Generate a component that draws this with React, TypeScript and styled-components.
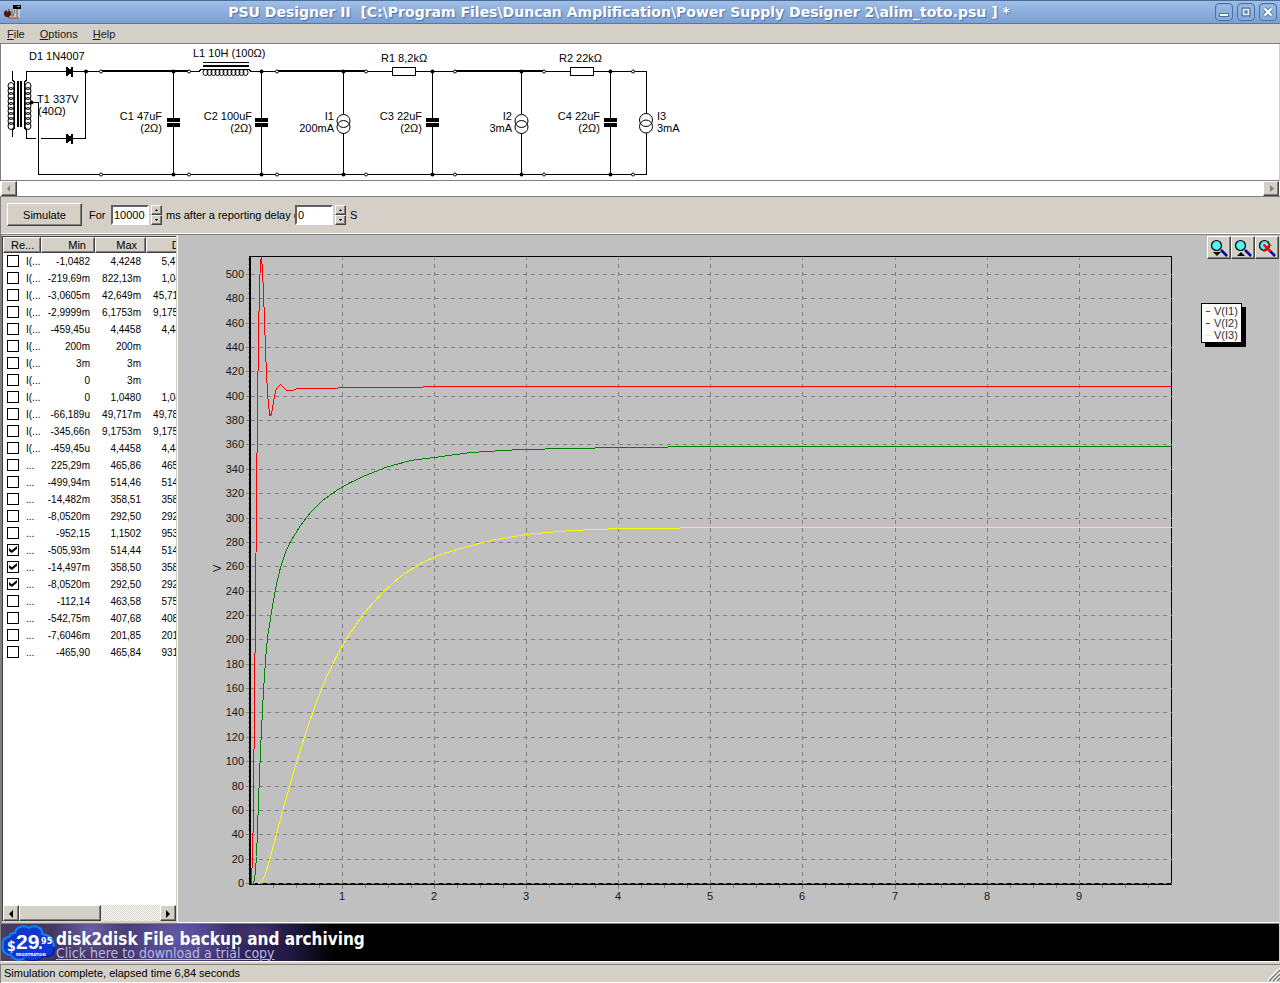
import React from "react";
import styled, { createGlobalStyle, css } from "styled-components";

const face = "#d4d0c8";
const sans = `"Liberation Sans", Arial, sans-serif`;

const GlobalStyle = createGlobalStyle`
  *, *::before, *::after { box-sizing: border-box; }
  body { margin: 0; background: ${face}; font-family: ${sans}; font-size: 11px; line-height: 12px; color: #000; }
  button, input { font: inherit; color: inherit; }
`;

const raised = css`
  border: 1px solid;
  border-color: #fff #404040 #404040 #fff;
  box-shadow: inset -1px -1px 0 #808080;
  background: ${face};
`;

const Window = styled.div`
  display: flex;
  flex-direction: column;
  min-height: 100vh;
  border-bottom: 1px solid #4a6684;
`;

const TitleBar = styled.header`
  display: flex;
  align-items: center;
  height: 24px;
  padding: 0 3px;
  border-top: 1px solid #4a6d98;
  border-bottom: 1px solid #5078b0;
  background: linear-gradient(#a0bee6, #7ba0d3);
`;

const Title = styled.h1`
  flex: 1;
  margin: 0;
  text-align: center;
  white-space: pre;
  overflow: hidden;
  font: bold 14px/20px "DejaVu Sans", sans-serif;
  color: #fff;
  text-shadow: 1px 1px 1px #4a6fa5;
`;

const AppIcon = styled.svg`
  display: block;
  width: 20px;
  height: 16px;
`;

const WindowButtons = styled.div`
  display: flex;
  gap: 4px;
`;

const WindowButton = styled.button`
  width: 18px;
  height: 18px;
  padding: 0;
  border: 1px solid #4a70a6;
  border-radius: 4px;
  background: linear-gradient(#9dbce4, #82a6d8);
  box-shadow: inset 0 0 0 1px #8fb0dd;
  svg { display: block; width: 16px; height: 16px; }
`;

const MenuBar = styled.nav`
  display: flex;
  gap: 15px;
  height: 20px;
  padding: 0 7px;
  border-bottom: 1px solid #808080;
`;

const MenuItem = styled.button`
  padding: 0;
  border: 0;
  background: none;
  font-size: 11px;
  line-height: 20px;
  color: #202020;
`;

const SchematicPane = styled.section`
  height: 137px;
  margin-right: 1px;
  border-left: 1px solid #808080;
  border-bottom: 1px solid #808080;
  background: #fff;
  overflow: hidden;
`;

const SchematicSvg = styled.svg`
  display: block;
  font: 11px ${sans};
`;

const HScroll = styled.div<{ $inset?: boolean }>`
  display: flex;
  flex: none;
  height: ${(p) => (p.$inset ? 16 : 15)}px;
  background: ${(p) => (p.$inset ? "repeating-conic-gradient(#fff 0 25%, #d4d0c8 0 50%) 0 0 / 2px 2px" : "#fff")};
`;

const SchematicScroll = styled.div`
  padding: 0 1px;
  border-bottom: 1px solid #808080;
  background: #fff;
`;

const ScrollButton = styled.button`
  ${raised}
  flex: none;
  width: 16px;
  padding: 0;
  svg { display: block; width: 14px; height: 13px; }
`;

const Track = styled.div`
  flex: 1;
`;

const Thumb = styled.div`
  ${raised}
  flex: none;
  width: 82px;
`;

const ControlBar = styled.form`
  display: flex;
  align-items: center;
  height: 38px;
  padding: 0 6px 2px;
  border-left: 1px solid #808080;
  border-bottom: 1px solid #808080;
  box-shadow: inset 0 -1px 0 #fff;
`;

const SimulateButton = styled.button`
  ${raised}
  width: 75px;
  height: 23px;
  margin-right: 7px;
  padding: 0;
`;

const Label = styled.label<{ $w: number }>`
  width: ${(p) => p.$w}px;
  overflow: hidden;
  white-space: nowrap;
`;

const NumberBox = styled.input`
  width: 38px;
  height: 20px;
  margin-right: 2px;
  padding: 0 1px;
  border: 2px solid;
  border-color: #606060 #fff #fff #606060;
  background: #fff;
  outline: none;
`;

const Spinner = styled.div`
  display: flex;
  flex-direction: column;
  width: 11px;
  height: 20px;
  margin-right: 4px;
`;

const SpinButton = styled.button`
  ${raised}
  flex: 1;
  display: flex;
  align-items: center;
  justify-content: center;
  padding: 0;
  svg { display: block; width: 3px; height: 2px; }
`;

const Main = styled.main`
  display: flex;
  flex: 1;
`;

const ListPane = styled.section`
  display: flex;
  flex-direction: column;
  flex: none;
  width: 178px;
  padding: 1px 0 2px;
  border-left: 2px solid #808080;
  border-right: 1px solid #fff;
  background: ${face};
`;

const ListView = styled.div`
  display: flex;
  flex-direction: column;
  flex: 1;
  border: solid #404040;
  border-width: 1px 0 0 1px;
  background: #fff;
  margin-right: 1px;
`;

const TableWrap = styled.div`
  flex: 1;
  width: 100%;
  overflow: hidden;
`;

const ResultTable = styled.table`
  table-layout: fixed;
  width: 194px;
  border-collapse: separate;
  border-spacing: 0;
`;

const HeadCell = styled.th<{ $left?: boolean }>`
  ${raised}
  height: 16px;
  padding: 0 8px;
  padding-left: 7px;
  text-align: ${(p) => (p.$left ? "left" : "right")};
  font-weight: normal;
  line-height: 13px;
`;

const Cell = styled.td<{ $left?: boolean }>`
  height: 17px;
  padding: ${(p) => (p.$left ? "0 0 1px 4px" : "0 5px 0 0")};
  text-align: ${(p) => (p.$left ? "left" : "right")};
  font-size: 10px;
  line-height: 16px;
  white-space: nowrap;
`;

const RowLabel = styled.label`
  display: flex;
  align-items: flex-start;
  gap: 7px;
  height: 16px;
  line-height: 18px;
`;

const Check = styled.input`
  appearance: none;
  flex: none;
  width: 12px;
  height: 12px;
  margin: 2px 0 0;
  border: 1px solid #000;
  background: #fff;
  &:checked::before {
    content: "";
    display: block;
    width: 8px;
    height: 7px;
    margin: 1px;
    background: #000;
    clip-path: polygon(0 30%, 35% 60%, 100% 0, 100% 38%, 35% 100%, 0 70%);
  }
`;

const ChartPane = styled.section`
  display: flex;
  flex: 1;
  min-width: 0;
  margin-right: 1px;
  border-bottom: 1px solid #fff;
  background: #c0c0c0;
`;

const ChartSvg = styled.svg`
  display: block;
  flex: 1;
  min-width: 0;
  font: 11px ${sans};
`;

const Side = styled.aside`
  display: flex;
  flex-direction: column;
  align-items: flex-start;
  flex: none;
  width: 84px;
`;

const ZoomBar = styled.div`
  display: flex;
  align-self: flex-end;
  margin: 1px 0 44px;
`;

const ZoomButton = styled.button`
  ${raised}
  width: 24px;
  height: 23px;
  padding: 0;
  svg { display: block; width: 22px; height: 21px; }
`;

const Legend = styled.ul`
  width: 41px;
  margin: 0 0 0 6px;
  padding: 1px 3px 1px 4px;
  border: 1px solid #000;
  background: #fff;
  box-shadow: 4px 4px 0 #000;
  list-style: none;
`;

const LegendItem = styled.li<{ $color: string }>`
  display: flex;
  align-items: center;
  gap: 4px;
  line-height: 12px;
  color: #303030;
  &::before {
    content: "";
    width: 4px;
    height: 1px;
    background: ${(p) => p.$color};
  }
`;

const Banner = styled.a`
  display: flex;
  height: 39px;
  border: solid;
  border-width: 1px 0 1px 1px;
  border-color: #808080 #fff #fff #808080;
  margin-right: 1px;
  background: #000;
  color: #fff;
  text-decoration: none;
`;

const BannerArt = styled.div`
  display: flex;
  width: 370px;
  background:
    radial-gradient(ellipse 40px 30px at 90px 6px, #6a60a8, transparent),
    radial-gradient(ellipse 60px 34px at 175px 12px, #6258a8, transparent),
    radial-gradient(ellipse 30px 18px at 255px 8px, #463470, transparent),
    linear-gradient(90deg, #4a3c64, #40305c 25%, #4a4084 50%, #2c2054 68%, #221a44 78%, #000 90%);
`;

const BannerText = styled.div`
  display: flex;
  flex-direction: column;
  padding: 5px 0 0 1px;
  white-space: nowrap;
  font-family: "DejaVu Sans Condensed", "DejaVu Sans", sans-serif;
`;

const Headline = styled.strong`
  font-size: 17px;
  line-height: 20px;
`;

const Tagline = styled.span`
  font-size: 14px;
  line-height: 8px;
  color: #b8b8e0;
  text-decoration: underline;
  text-decoration-thickness: 1px;
`;

const StatusBar = styled.footer`
  display: flex;
  justify-content: space-between;
  height: 19px;
  margin-top: 2px;
  padding-left: 3px;
  border: solid #808080;
  border-width: 1px 0 0 1px;
  box-shadow: inset 0 -1px 0 #fff;
  font-size: 11px;
  line-height: 17px;
  svg { display: block; width: 13px; height: 14px; margin-top: 2px; }
`;

/* ---------- schematic ---------- */

const TerminalXs = [101, 189, 277, 366, 455, 544, 633];
const JunctionXs = [173, 261, 343, 432, 521, 610];

const coilV = (x: number, y: number, n: number, dir: 1 | -1) =>
  Array.from({ length: n }, (_, i) => (
    <ellipse key={i} cx={x + dir * 3} cy={y + i * 5} rx="3" ry="3.500" />
  ));

const Capacitor = ({ x }: { x: number }) => (
  <g>
    <path d={`M${x + 0.5} 71V118M${x + 0.5} 127V174`} stroke="#000" />
    <path d={`M${x - 6} 118h13v4h-13zM${x - 6} 123h13v4h-13z`} />
  </g>
);

const Source = ({ x }: { x: number }) => (
  <g fill="none" stroke="#000">
    <path d={`M${x + 0.5} 71V114M${x + 0.5} 133V174`} />
    <g shapeRendering="auto">
      <circle cx={x + 0.5} cy="121" r="6.5" />
      <circle cx={x + 0.5} cy="127" r="6.5" />
    </g>
  </g>
);

const Diode = ({ y }: { y: number }) => (
  <path d={`M66 ${y - 5}L71 ${y - 2}V${y - 5}h2v10h-2v-3L66 ${y + 5}z`} />
);

const parts: [number, number, string, "start" | "end"][] = [
  [29, 60, "D1 1N4007", "start"],
  [37, 103, "T1 337V", "start"],
  [38, 115, "(40Ω)", "start"],
  [193, 57, "L1 10H (100Ω)", "start"],
  [162, 120, "C1 47uF", "end"],
  [162, 132, "(2Ω)", "end"],
  [252, 120, "C2 100uF", "end"],
  [252, 132, "(2Ω)", "end"],
  [334, 120, "I1", "end"],
  [334, 132, "200mA", "end"],
  [381, 62, "R1 8,2kΩ", "start"],
  [422, 120, "C3 22uF", "end"],
  [422, 132, "(2Ω)", "end"],
  [512, 120, "I2", "end"],
  [512, 132, "3mA", "end"],
  [559, 62, "R2 22kΩ", "start"],
  [600, 120, "C4 22uF", "end"],
  [600, 132, "(2Ω)", "end"],
  [657, 120, "I3", "start"],
  [657, 132, "3mA", "start"],
];

const Schematic = () => (
  <SchematicSvg width="700" height="136" viewBox="1 44 700 136" role="img" aria-label="Power supply schematic">
    <g shapeRendering="crispEdges">
      <g fill="none" stroke="#000">
        <path d="M12.5 71V80M12.5 80L14.5 82V128L12.5 130V137M26.5 80V71.5H66M26.5 80L24.5 82V128L26.5 130V138.5H36M41 138.5H85.5V71.5M73 71.5H101M31 102.5H38.5V174.5H646.5V71.5H594" />
        <path d="M18 81V127M21 81V127" strokeWidth="2" />
        <path d="M189 71.5H199L201 69.5H249L251 71.5H277M366 71.5H392M416 71.5H455M544 71.5H570" />
        <path d="M203 62.5H249" />
        <path d="M203 66H249M101 71H189M277 71H366M455 71H544" strokeWidth="2" />
        <rect x="392.500" y="67.500" width="23" height="8" fill="#fff" />
        <rect x="570.500" y="67.500" width="23" height="8" fill="#fff" />
      </g>
      <g fill="none" stroke="#000" shapeRendering="auto">
        {coilV(14, 86, 9, -1)}
        {coilV(25, 86, 9, 1)}
        {Array.from({ length: 11 }, (_, i) => (
          <ellipse key={i} cx={205.5 + i * 4} cy="72.500" rx="2.500" ry="3" />
        ))}
      </g>
      <Diode y={71.5} />
      <Diode y={138.5} />
      <Capacitor x={173} />
      <Capacitor x={261} />
      <Source x={343} />
      <Capacitor x={432} />
      <Source x={521} />
      <Capacitor x={610} />
      <path d="M639 113h14v20h-14z" fill="#fff" />
      <g fill="none" stroke="#000" shapeRendering="auto">
        <ellipse cx="646" cy="120" rx="6.500" ry="6.500" />
        <ellipse cx="646" cy="126.500" rx="6.500" ry="6.500" />
      </g>
    </g>
    <circle cx="86" cy="71.500" r="2" />
    <circle cx="31.500" cy="102.500" r="2" />
    {JunctionXs.map((x) => (
      <g key={x}>
        <circle cx={x + 0.5} cy="71.500" r="2" />
        <circle cx={x + 0.5} cy="174.500" r="2" />
      </g>
    ))}
    {TerminalXs.map((x) => (
      <g key={x} fill="#fff" stroke="#000">
        <circle cx={x} cy="71.500" r="1.500" />
        <circle cx={x} cy="174.500" r="1.500" />
      </g>
    ))}
    {parts.map(([x, y, text, anchor]) => (
      <text key={`${x}-${y}`} x={x} y={y} textAnchor={anchor}>
        {text}
      </text>
    ))}
  </SchematicSvg>
);

/* ---------- results ---------- */

const results: [string, string, string, string, boolean?][] = [
  ["I(...", "-1,0482", "4,4248", "5,4730"],
  ["I(...", "-219,69m", "822,13m", "1,0418"],
  ["I(...", "-3,0605m", "42,649m", "45,710m"],
  ["I(...", "-2,9999m", "6,1753m", "9,1752m"],
  ["I(...", "-459,45u", "4,4458", "4,4463"],
  ["I(...", "200m", "200m", ""],
  ["I(...", "3m", "3m", ""],
  ["I(...", "0", "3m", ""],
  ["I(...", "0", "1,0480", "1,0480"],
  ["I(...", "-66,189u", "49,717m", "49,783m"],
  ["I(...", "-345,66n", "9,1753m", "9,1756m"],
  ["I(...", "-459,45u", "4,4458", "4,4463"],
  ["...", "225,29m", "465,86", "465,63"],
  ["...", "-499,94m", "514,46", "514,96"],
  ["...", "-14,482m", "358,51", "358,52"],
  ["...", "-8,0520m", "292,50", "292,51"],
  ["...", "-952,15", "1,1502", "953,30"],
  ["...", "-505,93m", "514,44", "514,95", true],
  ["...", "-14,497m", "358,50", "358,51", true],
  ["...", "-8,0520m", "292,50", "292,51", true],
  ["...", "-112,14", "463,58", "575,72"],
  ["...", "-542,75m", "407,68", "408,22"],
  ["...", "-7,6046m", "201,85", "201,86"],
  ["...", "-465,90", "465,84", "931,74"],
];

const Results = () => (
  <ListPane>
    <ListView>
      <TableWrap>
        <ResultTable>
          <colgroup>
            <col style={{ width: 38 }} />
            <col style={{ width: 54 }} />
            <col style={{ width: 51 }} />
            <col style={{ width: 51 }} />
          </colgroup>
          <thead>
            <tr>
              <HeadCell $left>Re...</HeadCell>
              <HeadCell>Min</HeadCell>
              <HeadCell>Max</HeadCell>
              <HeadCell>Diff</HeadCell>
            </tr>
          </thead>
          <tbody>
            {results.map(([name, min, max, diff, on], i) => (
              <tr key={i}>
                <Cell $left>
                  <RowLabel>
                    <Check type="checkbox" defaultChecked={on} />
                    {name}
                  </RowLabel>
                </Cell>
                <Cell>{min}</Cell>
                <Cell>{max}</Cell>
                <Cell>{diff}</Cell>
              </tr>
            ))}
          </tbody>
        </ResultTable>
      </TableWrap>
      <HScroll $inset>
        <ScrollButton aria-label="Scroll left">
          <svg><path d="M9 3v8L5 7z" /></svg>
        </ScrollButton>
        <Thumb />
        <Track />
        <ScrollButton aria-label="Scroll right">
          <svg><path d="M5 3v8l4-4z" /></svg>
        </ScrollButton>
      </HScroll>
    </ListView>
  </ListPane>
);

/* ---------- chart ---------- */

const yAt = (v: number) => Math.round(883 - v * 1.2183);
const xAt = (t: number) => Math.floor(250 + t * 92.15);
const majorY = Array.from({ length: 26 }, (_, i) => i * 20);
const majorX = Array.from({ length: 9 }, (_, i) => i + 1);
const minorY = Array.from({ length: 129 }, (_, i) => i * 4);
const minorX = Array.from({ length: 39 }, (_, i) => (i + 1) / 4);

const traces = [
  {
    color: "#ff0000",
    points:
      "251,883 251,868 252,867 253,800 254,700 255,608 256,500 257,408 258,336 259,287 260,260 261,257 262,270 263,292 264,320 265,349 266,373 267,392 268,405 269,412 269,415 270,415 271,413 272,408 273,402 274,396 275,391 276,388 278,386 280,384 282,386 284,388 286,390 292,390 297,388 337,388 338,387 422,387 423,386 1171,386",
  },
  {
    color: "#008000",
    points:
      "252,883 254,880 255,870 256,856 257,830 258,800 259,776 260,750 261,730 262,710 263,690 264,675 265,660 266,648 267,637 270,618 273,600 276,584 280,567 285,552 290,541 300,525 310,512 322,500 336,490 350,482 365,475 385,467 410,460 434,457 470,452 520,449 570,448 620,447 667,447 668,446 1171,446",
  },
  {
    color: "#ffff00",
    points:
      "258,883 260,882 262,880 265,873 269,860 274,841 279,822 285,800 295,765 305,733 315,704 325,679 335,658 342,645 350,632 365,611 382,592 400,576 420,563 440,554 460,548 490,540 525,534 570,530 620,528 679,528 680,527 1171,527",
  },
];

const Chart = () => (
  <ChartSvg viewBox="178 235 1017 687" preserveAspectRatio="xMinYMin meet" role="img" aria-label="Voltage over time">
    <g transform="translate(0.5 0.5)" fill="none" shapeRendering="crispEdges">
      <g stroke="#808080">
        {minorY.map((v) => (
          <path key={v} d={`M247 ${yAt(v)}H249`} />
        ))}
        {minorX.map((t) => (
          <path key={t} d={`M${xAt(t)} 884V887`} />
        ))}
        {majorY.map((v) => (
          <path key={v} d={`M245 ${yAt(v)}H249`} />
        ))}
        {majorX.map((t) => (
          <path key={t} d={`M${xAt(t)} 884V888`} />
        ))}
      </g>
      <path d="M249 256H1171V884H249" stroke="#000" />
      <path d="M250 883H1171" stroke="#000" />
      <path d="M249.500 255V884" stroke="#000" strokeWidth="2" />
      <g stroke="#808080" strokeDasharray="4 4">
        {majorY.map((v) => (
          <path key={v} d={`M250 ${yAt(v)}H1171`} />
        ))}
        {majorX.map((t) => (
          <path key={t} d={`M${xAt(t)} 883V257`} />
        ))}
      </g>
      {traces.map((t) => (
        <polyline key={t.color} points={t.points} stroke={t.color} />
      ))}
    </g>
    <g fill="#181818">
      {majorY.map((v) => (
        <text key={v} x="244" y={yAt(v) + 4} textAnchor="end">
          {v}
        </text>
      ))}
      {majorX.map((t) => (
        <text key={t} x={xAt(t)} y="900" textAnchor="middle">
          {t}
        </text>
      ))}
      <text transform="translate(221 572) rotate(-90)">V</text>
    </g>
  </ChartSvg>
);

const Lens = ({ children }: { children: React.ReactNode }) => (
  <svg>
    <path d="M13 13l6 6" stroke="#0000a0" strokeWidth="2.500" />
    <circle cx="8.500" cy="8.500" r="5" fill="#40f0f0" stroke="#000" strokeWidth="1.200" />
    <path d="M6 9l3-3M7 11l4-4M9 12l3-3" stroke="#a8ffff" />
    {children}
  </svg>
);

const Spin = ({ name }: { name: string }) => (
  <Spinner>
    <SpinButton type="button" aria-label={`Increase ${name}`}>
      <svg><path d="M0 2L1.500 0L3 2z" /></svg>
    </SpinButton>
    <SpinButton type="button" aria-label={`Decrease ${name}`}>
      <svg><path d="M0 0h3L1.500 2z" /></svg>
    </SpinButton>
  </Spinner>
);

const PriceBadge = () => (
  <svg width="54" height="37" viewBox="0 0 54 37" role="img" aria-label="$29.95 registration">
    <path d="M14 9C15 2 24 1 28 4C34 0 42 4 41 10C49 11 53 16 53 23C54 31 48 33 42 32C38 38 28 38 24 34C18 38 11 35 10 31C4 31 1 27 2 22C1 17 3 13 8 13C9 10 11 9 14 9Z" fill="#1038d0" stroke="#0a84ff" strokeWidth="2" />
    <path d="M24 34C28 38 38 38 42 32C48 33 54 31 53 23" fill="none" stroke="#0818a0" strokeWidth="2" />
    <g fill="#fff" fontFamily="DejaVu Sans Condensed, DejaVu Sans, sans-serif" fontWeight="bold">
      <text x="6" y="27" fontSize="14">$</text>
      <text x="15" y="25" fontSize="21" fontFamily="Liberation Sans, sans-serif">29</text>
      <text x="37" y="25" fontSize="14">.</text>
      <text x="40" y="20" fontSize="9">95</text>
      <text x="15" y="32" fontSize="4">REGISTRATION</text>
    </g>
  </svg>
);

export default function App() {
  return (
    <Window>
      <GlobalStyle />
      <TitleBar>
        <AppIcon viewBox="0 0 20 16" aria-hidden="true">
          <path d="M10 1h8v4h-8z" fill="#000" />
          <path d="M14 2h3v1h-3z" fill="#30e040" />
          <path d="M7 5h10v9h-10z" fill="#c8c8c8" />
          <path d="M9 5v8M12 6l-2 6M14 5v8" stroke="#606068" />
          <path d="M1 8h7M3 6v3M6 5v4" stroke="#401010" />
          <path d="M1 8h7v3l-2 2H3l-2-2z" fill="#501818" />
          <path d="M5 13c1 2 3 1 5 1h6" stroke="#c03020" fill="none" />
        </AppIcon>
        <Title>{"PSU Designer II  [C:\\Program Files\\Duncan Amplification\\Power Supply Designer 2\\alim_toto.psu ] *"}</Title>
        <WindowButtons>
          <WindowButton aria-label="Minimize">
            <svg><path d="M3.500 9.500h9v3h-9z" fill="#fff" stroke="#4a70a6" /></svg>
          </WindowButton>
          <WindowButton aria-label="Maximize">
            <svg><path d="M5.500 5.500h5v5h-5z" fill="#6088c0" stroke="#4a70a6" strokeWidth="4" /><path d="M5.500 5.500h5v5h-5z" fill="#6088c0" stroke="#e8f0fc" strokeWidth="1.500" /></svg>
          </WindowButton>
          <WindowButton aria-label="Close">
            <svg><path d="M4.500 4.500l7 7M11.500 4.500l-7 7" stroke="#4a70a6" strokeWidth="4" /><path d="M4.500 4.500l7 7M11.500 4.500l-7 7" stroke="#fff" strokeWidth="2.400" /></svg>
          </WindowButton>
        </WindowButtons>
      </TitleBar>
      <MenuBar>
        <MenuItem><u>F</u>ile</MenuItem>
        <MenuItem><u>O</u>ptions</MenuItem>
        <MenuItem><u>H</u>elp</MenuItem>
      </MenuBar>
      <SchematicPane>
        <Schematic />
      </SchematicPane>
      <SchematicScroll>
        <HScroll>
          <ScrollButton aria-label="Scroll left" disabled>
            <svg><path d="M8 3v7L5 6.500z" fill="#808080" /></svg>
          </ScrollButton>
          <Track />
          <ScrollButton aria-label="Scroll right" disabled>
            <svg><path d="M6 3v7l4-3.500z" fill="#808080" /></svg>
          </ScrollButton>
        </HScroll>
      </SchematicScroll>
      <ControlBar onSubmit={(e) => e.preventDefault()}>
        <SimulateButton type="submit">Simulate</SimulateButton>
        <Label htmlFor="duration" $w={22}>For</Label>
        <NumberBox id="duration" defaultValue="10000" />
        <Spin name="duration" />
        <Label htmlFor="delay" $w={129}>ms after a reporting delay of</Label>
        <NumberBox id="delay" defaultValue="0" />
        <Spin name="delay" />
        <span>S</span>
      </ControlBar>
      <Main>
        <Results />
        <ChartPane>
          <Chart />
          <Side>
            <ZoomBar>
              <ZoomButton aria-label="Zoom out">
                <Lens><path d="M5 15h8l-4 4z" /></Lens>
              </ZoomButton>
              <ZoomButton aria-label="Zoom in">
                <Lens><path d="M5 19h8l-4-4z" /></Lens>
              </ZoomButton>
              <ZoomButton aria-label="Reset zoom">
                <Lens><path d="M7.500 7.500l7 7M14.500 7.500l-7 7" stroke="#ff0000" strokeWidth="2.200" /></Lens>
              </ZoomButton>
            </ZoomBar>
            <Legend>
              <LegendItem $color="#ff0000">V(I1)</LegendItem>
              <LegendItem $color="#008000">V(I2)</LegendItem>
              <LegendItem $color="#ffff00">V(I3)</LegendItem>
            </Legend>
          </Side>
        </ChartPane>
      </Main>
      <Banner href="#trial">
        <BannerArt>
          <PriceBadge />
          <BannerText>
            <Headline>disk2disk File backup and archiving</Headline>
            <Tagline>Click here to download a trial copy</Tagline>
          </BannerText>
        </BannerArt>
      </Banner>
      <StatusBar>
        <span>Simulation complete, elapsed time 6,84 seconds</span>
        <svg>
          <path d="M1 14L13 2M5 14l8-8M9 14l4-4" stroke="#fff" strokeWidth="3" />
          <path d="M2 14L13 3M6 14l7-7M10 14l3-3" stroke="#707070" strokeWidth="1.500" />
        </svg>
      </StatusBar>
    </Window>
  );
}
